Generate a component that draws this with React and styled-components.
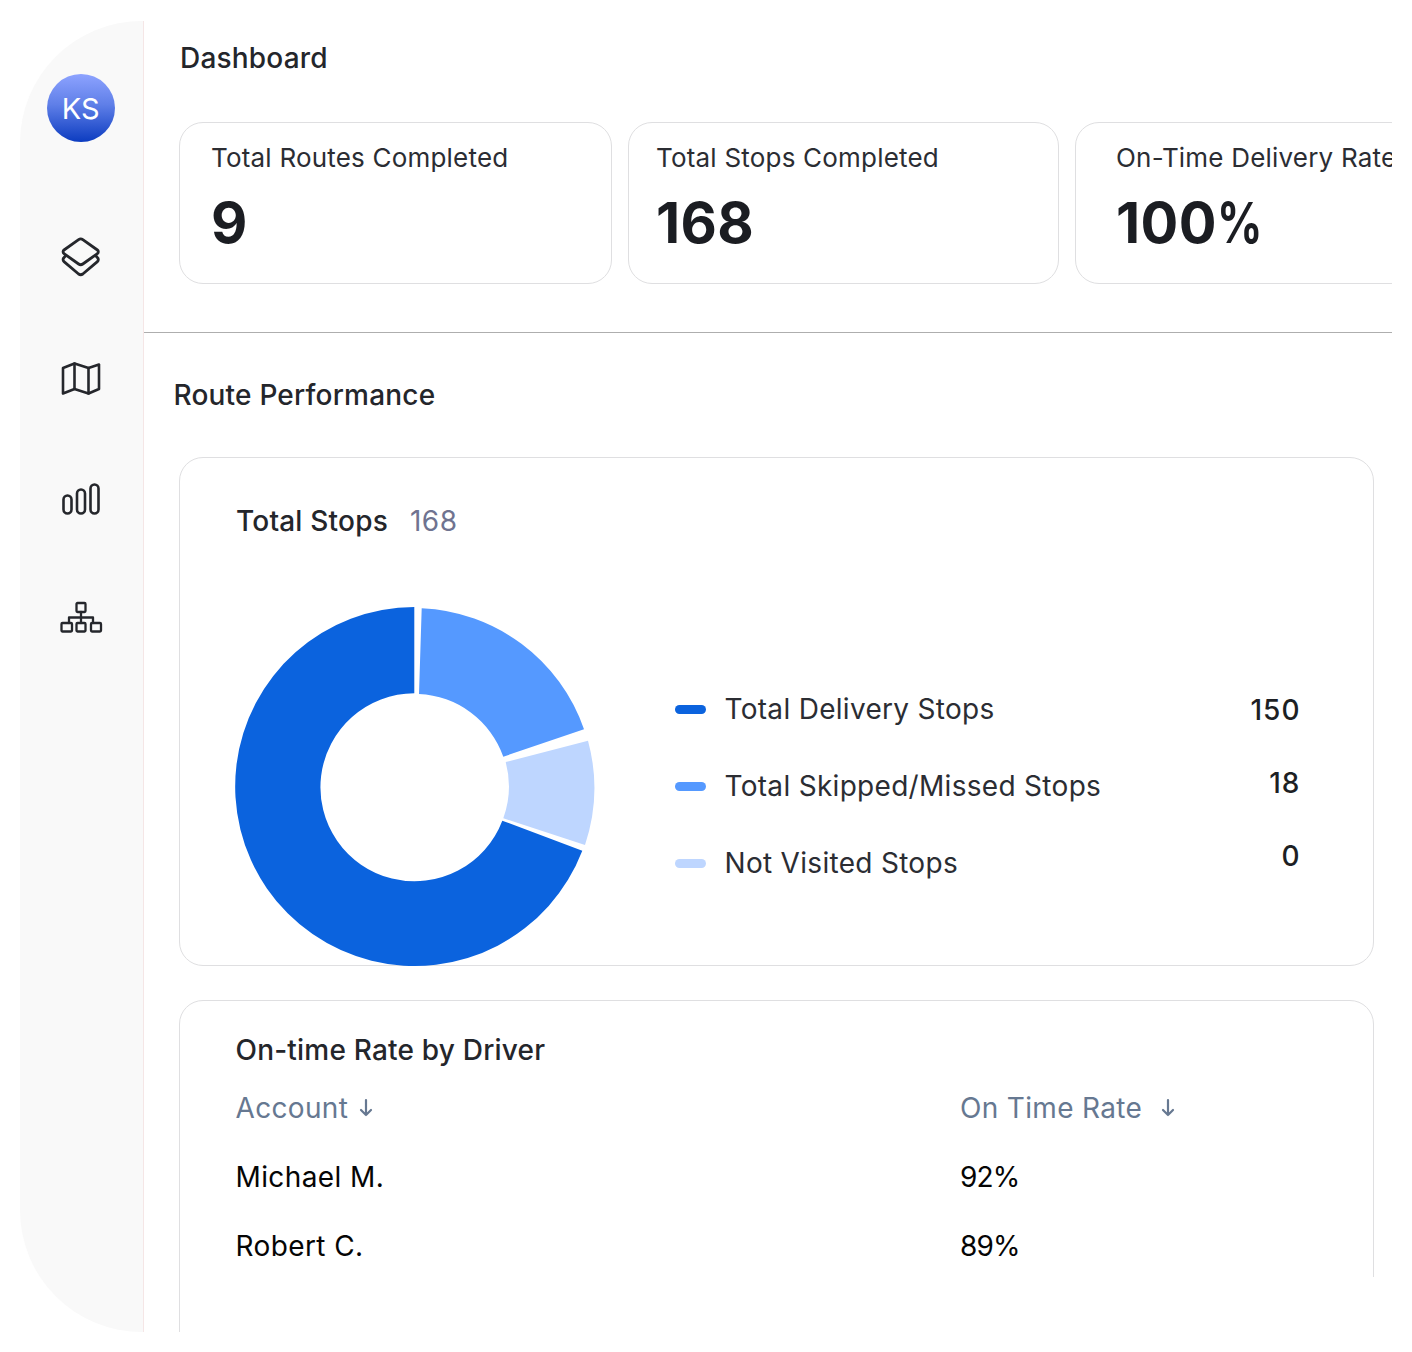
import React from 'react';
import styled, { createGlobalStyle } from 'styled-components';

const GlobalStyle = createGlobalStyle`
  html, body { margin: 0; padding: 0; background: #fff; }
  body { font-family: Inter, "Liberation Sans", sans-serif; -webkit-font-smoothing: antialiased; }
  * { box-sizing: border-box; }
`;

const Frame = styled.div`
  display: flex;
  width: 1372px;
  height: 1311px;
  margin: 21px 20px 20px;
`;

const Sidebar = styled.aside`
  flex: none;
  width: 123.5px;
  height: 100%;
  display: flex;
  flex-direction: column;
  align-items: center;
  padding: 53px 1px 0 0;
  background: #f9f9f9;
  border-right: 1.5px solid #f5e6e6;
  border-radius: 122px 0 0 122px;
`;

const Avatar = styled.div`
  width: 68px;
  height: 68px;
  border-radius: 50%;
  display: flex;
  align-items: center;
  justify-content: center;
  margin-bottom: 95px;
  font-size: 29px;
  color: #fff;
  background: linear-gradient(180deg, #8da3ff 0%, #5f7fe8 45%, #0c3cc0 100%);
`;

const NavIcons = styled.nav`
  display: flex;
  flex-direction: column;
  gap: 81px;
`;

const NavIcon = styled.svg`
  display: block;
  width: 44px;
  height: 40px;
  fill: none;
  stroke: #25272c;
  stroke-width: ${(props) => props.$stroke || 2.8};
  stroke-linecap: round;
  stroke-linejoin: round;
`;

const Main = styled.main`
  flex: none;
  width: 1248.5px;
  height: 100%;
  overflow: hidden;
`;

const PageTitle = styled.h1`
  margin: 0;
  padding: 16px 0 0 36.5px;
  font-size: 28px;
  line-height: 42px;
  font-weight: 500;
  letter-spacing: 0.2px;
  color: #24262b;
`;

const StatRow = styled.div`
  display: flex;
  gap: 16px;
  margin-top: 42.5px;
  padding-left: 35.5px;
`;

const StatCard = styled.div`
  flex: none;
  width: ${(props) => props.$width}px;
  height: 162.5px;
  padding: 16px 0 0 ${(props) => props.$inset}px;
  background: #fff;
  border: 1.5px solid #dfdfe1;
  border-radius: 24px;
`;

const StatLabel = styled.div`
  font-size: 26px;
  line-height: 38px;
  letter-spacing: 0.2px;
  color: #2b2d33;
  white-space: nowrap;
`;

const StatValue = styled.div`
  margin-top: 12px;
  font-size: 56px;
  line-height: 68px;
  font-weight: 700;
  letter-spacing: 0.4px;
  color: #1b1d22;
`;

const Percent = styled.span`
  display: inline-block;
  transform: scaleX(0.8);
  transform-origin: left center;
`;

const Divider = styled.hr`
  margin: 48px 0 0;
  border: none;
  height: 1px;
  background: #aeaeae;
`;

const SectionTitle = styled.h2`
  margin: 0;
  padding: 41px 0 0 30px;
  font-size: 28px;
  line-height: 42px;
  font-weight: 500;
  letter-spacing: 0.2px;
  color: #24262b;
`;

const Panel = styled.section`
  position: relative;
  width: 1195px;
  margin-left: 35.5px;
  background: #fff;
  border: 1.5px solid #dfdfe1;
  border-radius: 24px;
`;

const ChartPanel = styled(Panel)`
  height: 509px;
  margin-top: 41px;
  padding: 42px 0 0 56px;
`;

const TablePanel = styled(Panel)`
  height: 360px;
  margin-top: 34px;
  padding: 28px 0 0 55.5px;

  &::after {
    content: '';
    position: absolute;
    right: -2px;
    top: 276px;
    width: 4px;
    height: 90px;
    background: #fff;
  }
`;

const PanelHeading = styled.div`
  display: flex;
  gap: 22px;
  font-size: 28px;
  line-height: 42px;
  font-weight: 500;
  letter-spacing: 0.2px;
  color: #24262b;
`;

const HeadingCount = styled.span`
  font-weight: 400;
  letter-spacing: 0.5px;
  color: #6f7390;
`;

const ChartRow = styled.div`
  display: flex;
  align-items: flex-start;
  margin-top: 64px;
`;

const Donut = styled.svg`
  flex: none;
  display: block;
  width: 362px;
  height: 362px;
  margin-left: -1.5px;
  overflow: visible;
`;

const Legend = styled.div`
  flex: none;
  display: flex;
  width: 626px;
  margin: 82px 0 0 78px;
  justify-content: space-between;
`;

const LegendLabels = styled.ul`
  display: flex;
  flex-direction: column;
  gap: 35px;
  margin: 0;
  padding: 0;
  list-style: none;
`;

const LegendItem = styled.li`
  display: flex;
  align-items: center;
  gap: 19px;
  font-size: 28px;
  line-height: 42px;
  letter-spacing: 0.3px;
  color: #2b2d33;
`;

const Swatch = styled.span`
  flex: none;
  width: 31px;
  height: 9px;
  margin-top: 1px;
  border-radius: 5px;
  background: ${(props) => props.$color};
`;

const LegendValues = styled.div`
  display: flex;
  flex-direction: column;
  align-items: flex-end;
  gap: 31px;
  padding-top: 1px;
`;

const LegendValue = styled.span`
  font-size: 28px;
  line-height: 42px;
  font-weight: 500;
  letter-spacing: 1px;
  color: #1d1f24;
`;

const Table = styled.div`
  display: grid;
  grid-template-columns: 724.5px 1fr;
  grid-auto-rows: 69px;
  margin-top: 2px;
  align-items: center;
`;

const HeadCell = styled.div`
  display: flex;
  align-items: center;
  gap: ${(props) => props.$gap}px;
  font-size: 28px;
  line-height: 42px;
  letter-spacing: 0.33px;
  color: #667891;
  svg {
    display: block;
  }
`;

const Cell = styled.div`
  font-size: 28px;
  line-height: 42px;
  letter-spacing: ${(props) => props.$spacing}px;
  color: #050505;
`;

const DownArrow = () => (
  <svg width="14" height="20" viewBox="0 0 14 20" fill="none" stroke="#667891" strokeWidth="2.2" strokeLinecap="round" strokeLinejoin="round">
    <path d="M7 2v15M2 12l5 5 5-5" />
  </svg>
);

const LayersIcon = () => (
  <NavIcon viewBox="0 0 44 40">
    <path d="M19.6 2.6a3.6 3.6 0 0 1 4.2 0L38.4 13a2.2 2.2 0 0 1 0 3.6L23.8 27a3.6 3.6 0 0 1-4.2 0L5 16.6A2.2 2.2 0 0 1 5 13Z" />
    <path d="M6.4 19 5 20.6a2.6 2.6 0 0 0 0 4L19.6 37a3.6 3.6 0 0 0 4.2 0L38.4 24.6a2.6 2.6 0 0 0 0-4L37 19" />
  </NavIcon>
);

const MapIcon = () => (
  <NavIcon viewBox="0 0 44 40" $stroke={2.6}>
    <path d="M4 10 15.5 5.5 29.5 10 40 6.5v24.5l-10.5 4.5L15.5 31 4 35.5Z" />
    <path d="M15.5 5.5V31M29.5 10v25.5" />
  </NavIcon>
);

const BarsIcon = () => (
  <NavIcon viewBox="0 0 44 40" $stroke={2.6}>
    <rect x="4.5" y="16.5" width="8" height="18" rx="4" />
    <rect x="18" y="10.5" width="8" height="24" rx="4" />
    <rect x="31.5" y="5.5" width="8" height="29" rx="4" />
  </NavIcon>
);

const TreeIcon = () => (
  <NavIcon viewBox="0 0 44 40" $stroke={2.3}>
    <rect x="17.5" y="3" width="9" height="9" rx="1" />
    <path d="M22 12v11M10 23v-5.5h24V23" />
    <rect x="2.5" y="23" width="10.5" height="8.5" rx="1" />
    <rect x="17.5" y="23" width="9" height="8.5" rx="1" />
    <rect x="32" y="23" width="10" height="8.5" rx="1" />
  </NavIcon>
);

// donut is measured from the picture: centre 180,181, outer r 180, inner r 94
const SLICES = [
  { color: '#0b63de', d: 'M179.3 1 A179.5 179.5 0 1 0 347.3 244.7 L267.3 214.7 A94 94 0 1 1 179.3 87.3 Z' },
  { color: '#5599ff', d: 'M186.7 2.3 A180 180 0 0 1 349 123.3 L268.3 150.7 A94 94 0 0 0 184 88 Z' },
  { color: '#bed6ff', d: 'M353 134.7 A180 180 0 0 1 350 239 L268.3 212.3 A94 94 0 0 0 270.7 156 Z' },
];

const STATS = [
  { label: 'Total Routes Completed', value: '9', width: 433, inset: 31 },
  { label: 'Total Stops Completed', value: '168', width: 431, inset: 27 },
  { label: 'On-Time Delivery Rate', value: '100', unit: '%', width: 340, inset: 40 },
];

const LEGEND = [
  { label: 'Total Delivery Stops', value: '150', color: '#0b63de' },
  { label: 'Total Skipped/Missed Stops', value: '18', color: '#5599ff' },
  { label: 'Not Visited Stops', value: '0', color: '#bed6ff' },
];

const DRIVERS = [
  { name: 'Michael M.', rate: '92%' },
  { name: 'Robert C.', rate: '89%' },
];

const App = () => (
  <>
    <GlobalStyle />
    <Frame>
      <Sidebar>
        <Avatar>KS</Avatar>
        <NavIcons>
          <LayersIcon />
          <MapIcon />
          <BarsIcon />
          <TreeIcon />
        </NavIcons>
      </Sidebar>
      <Main>
        <PageTitle>Dashboard</PageTitle>
        <StatRow>
          {STATS.map((stat) => (
            <StatCard key={stat.label} $width={stat.width} $inset={stat.inset}>
              <StatLabel>{stat.label}</StatLabel>
              <StatValue>
                {stat.value}
                {stat.unit && <Percent>{stat.unit}</Percent>}
              </StatValue>
            </StatCard>
          ))}
        </StatRow>
        <Divider />
        <SectionTitle>Route Performance</SectionTitle>
        <ChartPanel>
          <PanelHeading>
            Total Stops <HeadingCount>168</HeadingCount>
          </PanelHeading>
          <ChartRow>
            <Donut viewBox="0 0 362 362">
              {SLICES.map((slice) => (
                <path key={slice.color} d={slice.d} fill={slice.color} />
              ))}
            </Donut>
            <Legend>
              <LegendLabels>
                {LEGEND.map((item) => (
                  <LegendItem key={item.label}>
                    <Swatch $color={item.color} />
                    {item.label}
                  </LegendItem>
                ))}
              </LegendLabels>
              <LegendValues>
                {LEGEND.map((item) => (
                  <LegendValue key={item.label}>{item.value}</LegendValue>
                ))}
              </LegendValues>
            </Legend>
          </ChartRow>
        </ChartPanel>
        <TablePanel>
          <PanelHeading>On-time Rate by Driver</PanelHeading>
          <Table>
            <HeadCell $gap={11}>
              Account <DownArrow />
            </HeadCell>
            <HeadCell $gap={19}>
              On Time Rate <DownArrow />
            </HeadCell>
            {DRIVERS.map((driver) => (
              <React.Fragment key={driver.name}>
                <Cell $spacing={0.4}>{driver.name}</Cell>
                <Cell $spacing={-0.8}>{driver.rate}</Cell>
              </React.Fragment>
            ))}
          </Table>
        </TablePanel>
      </Main>
    </Frame>
  </>
);

export default App;
